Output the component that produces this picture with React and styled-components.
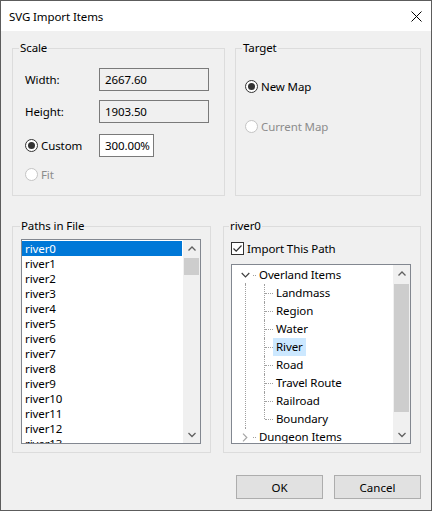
import React from 'react';
import styled, { createGlobalStyle } from 'styled-components';

const GlobalStyle = createGlobalStyle`
  html, body {
    margin: 0;
    padding: 0;
    background: #f0f0f0;
  }
  body {
    font-family: "Noto Sans", "Liberation Sans", sans-serif;
    font-size: 11.5px;
    letter-spacing: -0.1px;
    color: #000;
  }
`;

const Window = styled.div`
  width: 432px;
  height: 511px;
  box-sizing: border-box;
  border: 1px solid #5c5c5c;
  background: #f0f0f0;
  display: flex;
  flex-direction: column;
`;

const TitleBar = styled.div`
  height: 30px;
  flex: none;
  background: #fff;
  display: flex;
  align-items: center;
  justify-content: space-between;
  padding: 1px 9px 0 8px;
  box-sizing: border-box;
`;

const Title = styled.span`
  line-height: 16px;
`;

const Body = styled.div`
  padding: 0 10px 0 11px;
  display: flex;
  flex-direction: column;
`;

const Row = styled.div`
  display: flex;
  gap: ${p => p.$gap}px;
  margin-top: ${p => p.$top}px;
`;

const Group = styled.div`
  box-sizing: border-box;
  width: ${p => p.$width}px;
  height: ${p => p.$height}px;
  border: 1px solid #dcdcdc;
  display: flex;
  flex-direction: column;
`;

const Legend = styled.div`
  align-self: flex-start;
  margin: -9px 0 0 ${p => p.$left}px;
  padding: 0 1px;
  line-height: 16px;
  background: #f0f0f0;
`;

const FieldGrid = styled.div`
  display: flex;
  flex-direction: column;
  padding-left: 12px;
  margin-top: 12px;
`;

const FieldRow = styled.div`
  display: flex;
  align-items: center;
  height: ${p => p.$h || 23}px;
  margin-top: ${p => p.$top || 0}px;
`;

const FieldLabel = styled.div`
  width: 74px;
  flex: none;
`;

const TextBox = styled.div`
  box-sizing: border-box;
  width: ${p => p.$width}px;
  height: 23px;
  border: 1px solid #7a7a7a;
  background: ${p => (p.$readOnly ? '#f0f0f0' : '#fff')};
  padding: 0 5px;
  display: flex;
  align-items: center;
  white-space: nowrap;
`;

const RadioLabel = styled.label`
  display: flex;
  align-items: center;
  gap: 3px;
  height: 16px;
  width: ${p => p.$width || 'auto'};
  color: ${p => (p.$disabled ? '#8c8c8c' : '#000')};
`;

const RadioCircle = styled.span`
  box-sizing: border-box;
  width: 13px;
  height: 13px;
  border-radius: 50%;
  border: 1px solid ${p => (p.$disabled ? '#c4c4c4' : '#333')};
  background: #fff;
  display: flex;
  align-items: center;
  justify-content: center;

  &::after {
    content: '';
    display: ${p => (p.$checked ? 'block' : 'none')};
    width: 7px;
    height: 7px;
    border-radius: 50%;
    background: #333;
  }
`;

const TargetBody = styled.div`
  display: flex;
  flex-direction: column;
  gap: 24px;
  padding: 22px 0 0 9px;
`;

const ListBox = styled.div`
  box-sizing: border-box;
  width: 180px;
  height: 205px;
  margin: 5px 0 0 8px;
  border: 1px solid #828790;
  background: #fff;
  display: flex;
`;

const ListItems = styled.div`
  flex: 1;
  overflow: hidden;
  padding-top: 1px;
`;

const ListItem = styled.div`
  height: 15px;
  line-height: 15px;
  padding-left: 3px;
  margin-right: 1px;
  white-space: nowrap;
  background: ${p => (p.$selected ? '#0078d7' : 'transparent')};
  color: ${p => (p.$selected ? '#fff' : '#000')};
`;

const ScrollBar = styled.div`
  width: 17px;
  flex: none;
  background: #f0f0f0;
  display: flex;
  flex-direction: column;
`;

const ScrollArrow = styled.div`
  height: 17px;
  display: flex;
  align-items: center;
  justify-content: center;
`;

const ScrollTrack = styled.div`
  flex: 1;
  padding: 0 1px;
`;

const ScrollThumb = styled.div`
  margin-top: ${p => p.$top}px;
  height: ${p => p.$height}px;
  background: #cdcdcd;
`;

const CheckRow = styled.label`
  display: flex;
  align-items: center;
  gap: 3px;
  height: 16px;
  margin: 6px 0 0 7px;
`;

const CheckBox = styled.span`
  box-sizing: border-box;
  width: 13px;
  height: 13px;
  border: 1px solid #333;
  background: #fff;
  display: flex;
  align-items: center;
  justify-content: center;
`;

const TreeBox = styled.div`
  box-sizing: border-box;
  width: 180px;
  height: 180px;
  margin: 8px 0 0 7px;
  border: 1px solid #828790;
  background: #fff;
  display: flex;
`;

const TreeItems = styled.div`
  flex: 1;
  overflow: hidden;
  padding-top: 1px;
`;

const TreeRow = styled.div`
  position: relative;
  height: 18px;
  display: flex;
  align-items: center;

  &::before {
    content: '';
    position: absolute;
    left: 13px;
    top: ${p => (p.$lineUp ? '0' : '50%')};
    bottom: ${p => (p.$lineUp ? '50%' : '0')};
    border-left: 1px dotted #a0a0a0;
  }
`;

const Toggle = styled.span`
  position: relative;
  z-index: 1;
  width: 16px;
  height: 14px;
  margin-left: 5px;
  background: #fff;
  display: flex;
  align-items: center;
  justify-content: center;
`;

const Connector = styled.span`
  width: 3px;
  border-top: 1px dotted #a0a0a0;
`;

const NodeLabel = styled.span`
  height: 18px;
  line-height: 18px;
  padding: 0 3px;
  white-space: nowrap;
  background: ${p => (p.$selected ? '#cce8ff' : 'transparent')};
`;

const ChildList = styled.div`
  margin-left: 13px;
  border-left: 1px dotted #a0a0a0;
`;

const ChildRow = styled.div`
  position: relative;
  height: 18px;
  display: flex;
  align-items: center;
  padding-left: 27px;

  &::before {
    content: '';
    position: absolute;
    left: 18px;
    top: 0;
    bottom: ${p => (p.$last ? '50%' : '0')};
    border-left: 1px dotted #a0a0a0;
  }

  &::after {
    content: '';
    position: absolute;
    left: 19px;
    width: 8px;
    top: 9px;
    border-top: 1px dotted #a0a0a0;
  }
`;

const Footer = styled.div`
  display: flex;
  justify-content: flex-end;
  gap: 11px;
  margin-top: 22px;
`;

const Button = styled.button`
  box-sizing: border-box;
  width: 87px;
  height: 24px;
  border: 1px solid #adadad;
  background: #e1e1e1;
  font: inherit;
  color: #000;
  padding: 0;
`;

const Chevron = ({ dir = 'down', color = '#606060' }) => {
  const paths = {
    up: 'M0.5 4.5 L4 1 L7.5 4.5',
    down: 'M0.5 1 L4 4.5 L7.5 1',
  };
  return (
    <svg width="8" height="6" viewBox="0 0 8 6">
      <path d={paths[dir]} fill="none" stroke={color} strokeWidth="1.3" />
    </svg>
  );
};

const TreeChevron = ({ open }) =>
  open ? (
    <svg width="9" height="6" viewBox="0 0 9 6">
      <path d="M0.7 1 L4.5 4.8 L8.3 1" fill="none" stroke="#404040" strokeWidth="1.2" />
    </svg>
  ) : (
    <svg width="6" height="9" viewBox="0 0 6 9">
      <path d="M1 0.7 L4.8 4.5 L1 8.3" fill="none" stroke="#a6a6a6" strokeWidth="1.2" />
    </svg>
  );

const Scroll = ({ thumbTop, thumbHeight }) => (
  <ScrollBar>
    <ScrollArrow>
      <Chevron dir="up" />
    </ScrollArrow>
    <ScrollTrack>
      <ScrollThumb $top={thumbTop} $height={thumbHeight} />
    </ScrollTrack>
    <ScrollArrow>
      <Chevron dir="down" />
    </ScrollArrow>
  </ScrollBar>
);

const Radio = ({ label, checked, disabled, width }) => (
  <RadioLabel $disabled={disabled} $width={width}>
    <RadioCircle $checked={checked} $disabled={disabled} />
    {label}
  </RadioLabel>
);

const paths = Array.from({ length: 14 }, (_, i) => `river${i}`);
const overlandItems = ['Landmass', 'Region', 'Water', 'River', 'Road', 'Travel Route', 'Railroad', 'Boundary'];

export default function App() {
  return (
    <>
      <GlobalStyle />
      <Window>
        <TitleBar>
          <Title>SVG Import Items</Title>
          <svg width="11" height="11" viewBox="0 0 11 11">
            <path d="M0.5 0.5 L10.5 10.5 M10.5 0.5 L0.5 10.5" stroke="#000" strokeWidth="1" />
          </svg>
        </TitleBar>
        <Body>
          <Row $gap={10} $top={17}>
            <Group $width={213} $height={148}>
              <Legend $left={6}>Scale</Legend>
              <FieldGrid>
                <FieldRow>
                  <FieldLabel>Width:</FieldLabel>
                  <TextBox $width={110} $readOnly>2667.60</TextBox>
                </FieldRow>
                <FieldRow $top={9}>
                  <FieldLabel>Height:</FieldLabel>
                  <TextBox $width={110} $readOnly>1903.50</TextBox>
                </FieldRow>
                <FieldRow $top={11}>
                  <Radio label="Custom" checked width="74px" />
                  <TextBox $width={55}>300.00%</TextBox>
                </FieldRow>
                <FieldRow $h={16} $top={9}>
                  <Radio label="Fit" disabled />
                </FieldRow>
              </FieldGrid>
            </Group>
            <Group $width={186} $height={148}>
              <Legend $left={6}>Target</Legend>
              <TargetBody>
                <Radio label="New Map" checked />
                <Radio label="Current Map" disabled />
              </TargetBody>
            </Group>
          </Row>
          <Row $gap={12} $top={30}>
            <Group $width={199} $height={227}>
              <Legend $left={7}>Paths in File</Legend>
              <ListBox>
                <ListItems>
                  {paths.map((p, i) => (
                    <ListItem key={p} $selected={i === 0}>
                      {p}
                    </ListItem>
                  ))}
                </ListItems>
                <Scroll thumbTop={1} thumbHeight={17} />
              </ListBox>
            </Group>
            <Group $width={198} $height={227}>
              <Legend $left={5}>river0</Legend>
              <CheckRow>
                <CheckBox>
                  <svg width="11" height="11" viewBox="0 0 11 11">
                    <path d="M1.5 5.5 L4.2 8.2 L9.5 2.5" fill="none" stroke="#333" strokeWidth="1.2" />
                  </svg>
                </CheckBox>
                Import This Path
              </CheckRow>
              <TreeBox>
                <TreeItems>
                  <TreeRow>
                    <Toggle>
                      <TreeChevron open />
                    </Toggle>
                    <Connector />
                    <NodeLabel>Overland Items</NodeLabel>
                  </TreeRow>
                  <ChildList>
                    {overlandItems.map((item, i) => (
                      <ChildRow key={item} $last={i === overlandItems.length - 1}>
                        <NodeLabel $selected={item === 'River'}>{item}</NodeLabel>
                      </ChildRow>
                    ))}
                  </ChildList>
                  <TreeRow $lineUp>
                    <Toggle>
                      <TreeChevron />
                    </Toggle>
                    <Connector />
                    <NodeLabel>Dungeon Items</NodeLabel>
                  </TreeRow>
                </TreeItems>
                <Scroll thumbTop={2} thumbHeight={128} />
              </TreeBox>
            </Group>
          </Row>
          <Footer>
            <Button>OK</Button>
            <Button>Cancel</Button>
          </Footer>
        </Body>
      </Window>
    </>
  );
}
